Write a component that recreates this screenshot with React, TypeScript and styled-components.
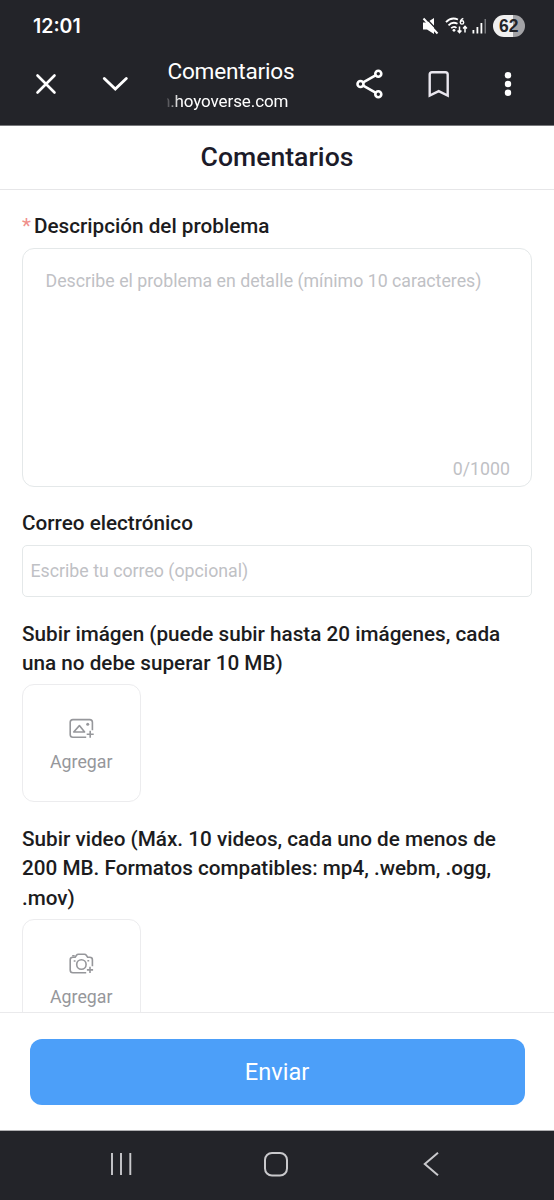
import React from "react";
import styled, { createGlobalStyle } from "styled-components";

const GlobalStyle = createGlobalStyle`
  *, *::before, *::after { box-sizing: border-box; }
  body { margin: 0; background: #fff; font-family: Roboto, sans-serif; }
  button { font-family: inherit; border: 0; padding: 0; background: none; }
  svg { display: block; }
`;

const Screen = styled.div`
  width: 554px;
  height: 1200px;
  display: flex;
  flex-direction: column;
  overflow: hidden;
  background: #fff;
`;

const TopChrome = styled.div`
  height: 126px;
  flex: none;
  background: #232429;
  border-bottom: 1px solid #77787b;
  color: #fff;
`;

const StatusBar = styled.div`
  height: 42px;
  padding: 10px 29px 0 33px;
  display: flex;
  align-items: center;
  justify-content: space-between;
`;

const Clock = styled.span`
  font: 600 19.5px/32px Inter, sans-serif;
`;

const StatusIcons = styled.div`
  display: flex;
  align-items: center;
  gap: 6px;
`;

const Network = styled.div`
  display: flex;
  align-items: center;
  gap: 3px;
`;

const Battery = styled.div`
  width: 32.5px;
  height: 22px;
  border-radius: 11px;
  background: linear-gradient(90deg, #f0f0f0 61%, #a3a3a6 61%);
  color: #232429;
  font: 700 17.5px/23px "Liberation Sans", sans-serif;
  text-align: center;
`;

const BrowserBar = styled.div`
  height: 84px;
  padding: 0 11px 0 11px;
  display: flex;
  align-items: center;
`;

const IconButton = styled.button`
  width: 69.2px;
  height: 69px;
  flex: none;
  display: flex;
  align-items: center;
  justify-content: center;
  color: #fff;
`;

const PageInfo = styled.div`
  flex: 1;
  min-width: 0;
  padding: 3px 0 0 18px;
  display: flex;
  flex-direction: column;
`;

const PageTitle = styled.span`
  font-size: 22.6px;
  line-height: 30px;
  letter-spacing: -0.2px;
`;

const PageHost = styled.span`
  width: 121px;
  height: 28px;
  overflow: hidden;
  display: flex;
  justify-content: flex-end;
  font-size: 17px;
  line-height: 28px;
  letter-spacing: -0.1px;
  mask-image: linear-gradient(90deg, rgba(0, 0, 0, 0.15), #000 12px);
`;

const Heading = styled.h1`
  flex: none;
  height: 64px;
  margin: 0;
  border-bottom: 1px solid #e6e6e8;
  text-align: center;
  font-size: 26.6px;
  font-weight: 500;
  line-height: 61px;
  color: #1c1b29;
`;

const Form = styled.main`
  flex: 1;
  min-height: 0;
  overflow: hidden;
  padding: 22px 22px 0;
`;

const Field = styled.section<{ $gap: number }>`
  margin-bottom: ${(p) => p.$gap}px;
`;

const Label = styled.div<{ $gap: number }>`
  margin-bottom: ${(p) => p.$gap}px;
  font-size: 20.7px;
  font-weight: 500;
  line-height: 29.5px;
  color: #1c1c1e;
  white-space: nowrap;
`;

const Required = styled.span`
  display: inline-block;
  width: 12px;
  font-weight: 400;
  color: #f0908c;
`;

const TextArea = styled.div`
  height: 239px;
  padding: 18px 21px 2px 22.5px;
  border: 1px solid #e4e8e9;
  border-radius: 12px;
  display: flex;
  flex-direction: column;
  justify-content: space-between;
  font-size: 17.75px;
  line-height: 29px;
  color: #bfc1c5;
`;

const Counter = styled.span`
  align-self: flex-end;
`;

const Input = styled.div`
  height: 52px;
  padding: 0 7.5px;
  border: 1px solid #e4e8e9;
  border-radius: 5px;
  font-size: 17.75px;
  line-height: 51px;
  color: #bfc1c5;
`;

const UploadTile = styled.button`
  width: 118.5px;
  height: 118px;
  padding-top: 33px;
  border: 1px solid #ececee;
  border-radius: 12px;
  display: flex;
  flex-direction: column;
  align-items: center;
  gap: 8px;
  font-size: 17.75px;
  line-height: 29px;
  color: #96979b;
`;

const Footer = styled.footer`
  flex: none;
  height: 118px;
  padding: 26px 29.5px 0;
  border-top: 1.5px solid #eaeaec;
  background: #fff;
`;

const Submit = styled.button`
  width: 100%;
  height: 65.5px;
  border-radius: 12px;
  background: #4c9ff9;
  color: #fff;
  font-size: 23.6px;
  line-height: 66px;
`;

const NavBar = styled.nav`
  flex: none;
  height: 70px;
  padding: 0 45px 4px 43px;
  border-top: 1px solid #b0b0b2;
  background: #232429;
  display: flex;
  align-items: center;
`;

const NavItem = styled.div`
  flex: 1;
  display: flex;
  justify-content: center;
`;

const MuteIcon = () => (
  <svg width="17" height="18" viewBox="0 0 17 18">
    <path d="M1 5.500h4L12 1v16l-7-4.500H1z" fill="#fff" />
    <path d="M3 0l14 15" stroke="#232429" strokeWidth="1.300" />
    <path d="M1.500 1.500l14 15" stroke="#fff" strokeWidth="2" />
  </svg>
);

const WifiIcon = () => (
  <svg width="24" height="18" viewBox="0 0 24 18" fill="none" stroke="#fff" strokeWidth="1.8">
    <path d="M1 5.2C4.300 1.600 9 .8 13 2.500M3.500 8.300c2.500-2.600 6-3.100 9-1.500M6.200 11.200c1.700-1.500 3.800-1.500 5.300-.3" />
    <circle cx="9" cy="13.300" r="1.400" fill="#fff" stroke="none" />
    <path d="M18.300 1.300c-2 .7-2.900 2.300-2.900 3.900" strokeWidth="1.400" />
    <circle cx="17" cy="5.400" r="1.700" strokeWidth="1.400" />
    <path d="M14.500 9.500v6M12.600 13.500l1.900 2.200 1.900-2.200M20 15.500v-6M18.100 11.600L20 9.400l1.900 2.200" strokeWidth="1.500" />
  </svg>
);

const SignalIcon = () => (
  <svg width="15" height="16" viewBox="0 0 15 16">
    <path d="M.5 12h1.800v3.500h-1.800zM4.500 9h1.800v6.500h-1.800zM8.500 5h1.800v10.500h-1.800z" fill="#fff" />
    <path d="M12.500 1h1.500v14.500h-1.500z" fill="#77787c" />
  </svg>
);

const CloseIcon = () => (
  <svg width="22" height="22" viewBox="0 0 22 22" stroke="#fff" strokeWidth="2.600" strokeLinecap="round">
    <path d="M2.500 2.500l17 17M19.500 2.500l-17 17" />
  </svg>
);

const ChevronIcon = () => (
  <svg width="28" height="16" viewBox="0 0 28 16" fill="none" stroke="#fff" strokeWidth="2.900" strokeLinecap="round">
    <path d="M3.300 2.500l11 10.500 11-10.500" />
  </svg>
);

const ShareIcon = () => (
  <svg width="30" height="30" viewBox="0 0 30 30" fill="none" stroke="#fff" strokeWidth="2.600">
    <circle cx="5.500" cy="15" r="3" />
    <circle cx="23.300" cy="4.800" r="3" />
    <circle cx="23.300" cy="25.200" r="3" />
    <path d="M8.200 13.400L20.500 6.400M8.200 16.600l12.300 7" />
  </svg>
);

const BookmarkIcon = () => (
  <svg width="22" height="28" viewBox="0 0 22 28" fill="none" stroke="#e9e6ee" strokeWidth="2.400">
    <path d="M1.700 25.500V4.500Q1.700 2.200 4 2.200h13.400Q19.700 2.200 19.700 4.500v21l-9-4.300z" />
  </svg>
);

const MoreIcon = () => (
  <svg width="8" height="26" viewBox="0 0 8 26" fill="#fff">
    <circle cx="4" cy="4.300" r="3.200" />
    <circle cx="4" cy="13" r="3.200" />
    <circle cx="4" cy="21.700" r="3.200" />
  </svg>
);

const AddImageIcon = () => (
  <svg width="26" height="22" viewBox="0 0 26 22" fill="none" stroke="#96979b" strokeWidth="1.600">
    <g transform="translate(0.7 0.3)">
      <path d="M23.700 12V4q0-2.700-2.700-2.700H4.200Q1.500 1.300 1.500 4v12.300Q1.500 19 4.200 19h13.300" />
      <path d="M10.700 7.300l5.200 6.400H5z" strokeLinejoin="round" />
      <path d="M21.500 12.500v7M18 16h7" />
      <circle cx="19" cy="6" r="1.500" fill="#96979b" stroke="none" />
    </g>
  </svg>
);

const AddCameraIcon = () => (
  <svg width="26" height="22" viewBox="0 0 26 22" fill="none" stroke="#96979b" strokeWidth="1.600">
    <g transform="translate(0.7 0)">
      <path d="M17.500 19.700H4.200q-2.700 0-2.700-2.700V6.800q0-2.500 2.700-2.500h2.300l1.300-2q.7-1 1.900-1h6q1.200 0 1.900 1l1.300 2h2.100q2.700 0 2.700 2.500v6.500" />
      <path d="M3.500 2.700h2.500M5 8h1.800M18.700 7.700h1.800" />
      <circle cx="12.700" cy="11.500" r="4.700" />
      <path d="M21.300 13.800v6.200M18.200 16.900h6.200" />
    </g>
  </svg>
);

const RecentsIcon = () => (
  <svg width="22" height="24" viewBox="0 0 22 24" stroke="#c9c9cc" strokeWidth="1.900">
    <path d="M2 1v22M11 1v22M20.300 1v22" />
  </svg>
);

const HomeIcon = () => (
  <svg width="26" height="26" viewBox="0 0 26 26" fill="none" stroke="#c9c9cc" strokeWidth="2">
    <rect x="2" y="2" width="22" height="22.500" rx="7" />
  </svg>
);

const BackIcon = () => (
  <svg width="18" height="26" viewBox="0 0 18 26" fill="none" stroke="#c9c9cc" strokeWidth="2">
    <path d="M16 1.800L2.800 13 16 24.200" />
  </svg>
);

export default function App() {
  return (
    <>
      <GlobalStyle />
      <Screen>
        <TopChrome>
          <StatusBar>
            <Clock>12:01</Clock>
            <StatusIcons>
              <MuteIcon />
              <Network>
                <WifiIcon />
                <SignalIcon />
              </Network>
              <Battery>62</Battery>
            </StatusIcons>
          </StatusBar>
          <BrowserBar>
            <IconButton aria-label="Cerrar"><CloseIcon /></IconButton>
            <IconButton aria-label="Minimizar"><ChevronIcon /></IconButton>
            <PageInfo>
              <PageTitle>Comentarios</PageTitle>
              <PageHost>n.hoyoverse.com</PageHost>
            </PageInfo>
            <IconButton aria-label="Compartir"><ShareIcon /></IconButton>
            <IconButton aria-label="Guardar"><BookmarkIcon /></IconButton>
            <IconButton aria-label="Más"><MoreIcon /></IconButton>
          </BrowserBar>
        </TopChrome>
        <Heading>Comentarios</Heading>
        <Form>
          <Field $gap={22}>
            <Label $gap={6.5}><Required>*</Required>Descripción del problema</Label>
            <TextArea>
              <span>Describe el problema en detalle (mínimo 10 caracteres)</span>
              <Counter>0/1000</Counter>
            </TextArea>
          </Field>
          <Field $gap={22.5}>
            <Label $gap={6.5}>Correo electrónico</Label>
            <Input>Escribe tu correo (opcional)</Input>
          </Field>
          <Field $gap={22.5}>
            <Label $gap={5.5}>
              Subir imágen (puede subir hasta 20 imágenes, cada<br />una no debe superar 10 MB)
            </Label>
            <UploadTile><AddImageIcon />Agregar</UploadTile>
          </Field>
          <Field $gap={0}>
            <Label $gap={6}>
              Subir video (Máx. 10 videos, cada uno de menos de<br />200 MB. Formatos compatibles: mp4, .webm, .ogg,<br />.mov)
            </Label>
            <UploadTile><AddCameraIcon />Agregar</UploadTile>
          </Field>
        </Form>
        <Footer>
          <Submit>Enviar</Submit>
        </Footer>
        <NavBar>
          <NavItem><RecentsIcon /></NavItem>
          <NavItem><HomeIcon /></NavItem>
          <NavItem><BackIcon /></NavItem>
        </NavBar>
      </Screen>
    </>
  );
}
